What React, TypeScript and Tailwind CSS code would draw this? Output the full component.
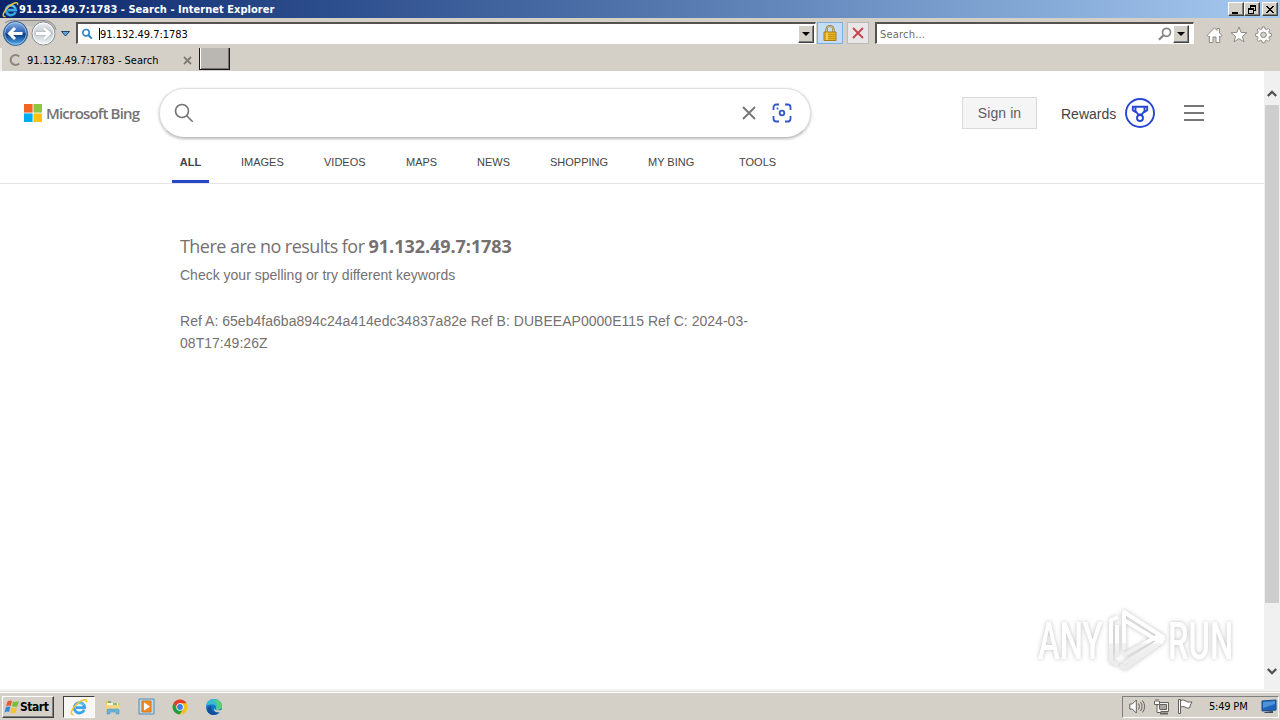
import type { ReactNode } from "react";

const tabs = [
  { label: "IMAGES", width: "w-[83px]" },
  { label: "VIDEOS", width: "w-[82px]" },
  { label: "MAPS", width: "w-[71px]" },
  { label: "NEWS", width: "w-[73px]" },
  { label: "SHOPPING", width: "w-[98px]" },
  { label: "MY BING", width: "w-[91px]" },
  { label: "TOOLS", width: "w-[60px]" },
];

const raised = "border border-t-white border-l-white border-r-[#404040] border-b-[#404040] bg-[#d4d0c8] shadow-[inset_-1px_-1px_0_#808080]";

function WindowButton({ children }: { children: ReactNode }) {
  return (
    <button className={`flex h-[14px] w-[16px] items-center justify-center ${raised}`}>
      <svg width="12" height="11" viewBox="0 0 12 11" shapeRendering="crispEdges">{children}</svg>
    </button>
  );
}

function DropButton() {
  return (
    <span className={`flex h-[18px] w-[16px] items-center justify-center ${raised}`}>
      <svg width="8" height="4" viewBox="0 0 8 4"><path d="M0 0h8L4 4z" /></svg>
    </span>
  );
}

function IeLogo({ size }: { size: number }) {
  return (
    <svg className="shrink-0" width={size} height={size} viewBox="0 0 18 18" fill="none">
      <path d="M14.2 11.8A5.2 5.2 0 1 1 14.6 9.700H6" stroke="#3aa6e6" strokeWidth="2.800" />
      <path d="M5 7.500A5 5 0 0 1 13.500 7" stroke="#8fd6f7" strokeWidth="1" />
      <path d="M3.700 16.400C-1 17.500 1.500 10.400 7.400 5.600 12 1.800 17.800-.2 16.400 4.400" stroke="#f0c62e" strokeWidth="1.500" />
    </svg>
  );
}

function TitleBar() {
  return (
    <div className="flex h-[18px] items-center bg-linear-to-r from-[#0a246a] to-[#a6caf0] pr-[2px] pl-[2px]">
      <IeLogo size={17} />
      <span className="pt-px text-[11px] leading-[17px] font-bold tracking-[0.03px] whitespace-nowrap text-white">
        91.132.49.7:1783 - Search - Internet Explorer
      </span>
      <div className="ml-auto flex">
        <WindowButton><path d="M2 8h6v2H2z" /></WindowButton>
        <WindowButton>
          <path d="M4 1h6v6H8V6h1V3H5v1H4zM2 4h6v6H2zm1 2v3h4V6z" fillRule="evenodd" />
        </WindowButton>
        <span className="w-[2px]" />
        <WindowButton>
          <path d="M2 2h2v1h1v1h2V3h1V2h2v1H9v1H8v1H7v1h1v1h1v1h1v1H8V8H7V7H5v1H4v1H2V8h1V7h1V6h1V5H4V4H3V3H2z" />
        </WindowButton>
      </div>
    </div>
  );
}

function AddressBar() {
  return (
    <div className="flex h-[30px] items-start">
      <svg className="shrink-0" width="76" height="29" viewBox="0 0 76 29">
        <defs>
          <linearGradient id="back" x1="0" y1="0" x2="0" y2="1">
            <stop offset="0" stopColor="#8db5e6" />
            <stop offset=".48" stopColor="#285fb4" />
            <stop offset=".52" stopColor="#08357f" />
            <stop offset="1" stopColor="#55b5f2" />
          </linearGradient>
          <linearGradient id="fwd" x1="0" y1="0" x2="0" y2="1">
            <stop offset="0" stopColor="#eff0f1" />
            <stop offset=".5" stopColor="#c5cbd0" />
            <stop offset="1" stopColor="#f4f8fa" />
          </linearGradient>
        </defs>
        <path d="M5 5Q9 1.500 16 2.500h28q9 0 12 9" fill="#c3c0bc" stroke="#8c8b89" />
        <circle cx="15.500" cy="15.500" r="12" fill="url(#back)" stroke="#385b88" />
        <circle cx="15.500" cy="15.500" r="10.800" fill="none" stroke="#a8cdee" strokeWidth=".8" />
        <path d="M15 10l-5.500 5.500L15 21M10 15.500h12.500" fill="none" stroke="#fff" strokeWidth="3" />
        <circle cx="43.500" cy="15.500" r="11.500" fill="url(#fwd)" stroke="#858b91" />
        <circle cx="43.500" cy="15.500" r="10.400" fill="none" stroke="#fff" />
        <path d="M44 10l5.500 5.500L44 21M49 15.500H36" fill="none" stroke="#aeb3b8" strokeWidth="4" />
        <path d="M44 10l5.500 5.500L44 21M49 15.500H36" fill="none" stroke="#fff" strokeWidth="2.800" />
        <path d="M61.500 13.500h8L65.500 18z" fill="#5fa5dc" stroke="#1b466f" />
      </svg>
      <div className="mt-[4px] flex h-[22px] w-[740px] items-center border-t-2 border-r border-b border-l-2 border-t-[#555250] border-r-white border-b-white border-l-[#555250] bg-white">
        <svg className="ml-[3px]" width="12" height="12" viewBox="0 0 12 12" fill="none" stroke="#3185c5">
          <circle cx="5" cy="4.700" r="3.200" strokeWidth="1.600" />
          <path d="M7.300 7l3.500 3.500" strokeWidth="2" />
        </svg>
        <span className="ml-[6px] h-[12px] w-px bg-black" />
        <span className="pt-[2px] text-[11px] leading-[16px] tracking-[-0.03px] text-black">91.132.49.7:1783</span>
        <span className="mr-px ml-auto"><DropButton /></span>
      </div>
      <div className="mt-[4px] ml-px flex h-[22px] w-[26px] items-center justify-center border border-[#7eaee4] bg-[#c5dcf7]">
        <svg width="14" height="17" viewBox="0 0 14 17">
          <path d="M3.500 8V4.500a3.500 3.500 0 0 1 7 0V8" fill="none" stroke="#8f7a3d" strokeWidth="2.200" />
          <path d="M3.500 8V4.500a3.500 3.500 0 0 1 7 0V8" fill="none" stroke="#e4cf85" strokeWidth=".8" />
          <path d="M1 7h12v8.500H1z" fill="#e8b424" stroke="#a87b16" />
          <path d="M1.500 9.500h11M1.500 11.500h11M1.500 13.500h11" stroke="#c9961c" />
          <path d="M4 7.500v7.500" stroke="#f9dc70" strokeWidth="1.400" />
        </svg>
      </div>
      <div className="mt-[4px] ml-[4px] flex h-[22px] w-[22px] items-center justify-center border border-[#bcb8b6] bg-[#e9e6e7]">
        <svg width="12" height="12" viewBox="0 0 12 12"><path d="M1 1l10 10M11 1L1 11" stroke="#c4454e" strokeWidth="1.900" /></svg>
      </div>
      <div className="mt-[4px] ml-[6px] flex h-[22px] w-[319px] items-center border-t-2 border-r border-b border-l-2 border-t-[#555250] border-r-white border-b-white border-l-[#555250] bg-white">
        <span className="ml-[3px] pt-[2px] text-[11px] leading-[16px] tracking-[0.200px] text-[#6d6d6d]">Search...</span>
        <svg className="ml-auto" width="14" height="14" viewBox="0 0 14 14" fill="none" stroke="#858585">
          <circle cx="8.500" cy="5.300" r="4" strokeWidth="1.700" />
          <path d="M5.700 8L1 12.700" strokeWidth="2.200" />
        </svg>
        <span className="mr-[4px] ml-[1px]"><DropButton /></span>
      </div>
      <svg className="mt-[8px] ml-[12px]" width="68" height="19" viewBox="0 0 68 19" fill="#fff" stroke="#8d8984" strokeLinejoin="round">
        <path d="M1 9.500L8.500 1.800l2.500 2.600V2.500h2.500V7L16 9.500l-1.500 1.300-.8-.8v6.500H10V11H7v5.500H3.300V10l-.8.8z" />
        <path d="M33 1l2.100 5.400 5.900.3-4.600 3.600 1.600 5.600-5-3.200-5 3.200 1.600-5.600L25 6.700l5.900-.3z" />
        <path d="M56.300 1h2.400l.4 2 1.500.6 1.700-1.200 1.700 1.700-1.200 1.700.6 1.500 2 .4v2.400l-2 .4-.6 1.500 1.200 1.700-1.700 1.700-1.700-1.200-1.500.6-.4 2h-2.400l-.4-2-1.500-.6-1.700 1.200-1.700-1.700 1.200-1.700-.6-1.500-2-.4V7.700l2-.4.6-1.500-1.200-1.700 1.700-1.700 1.700 1.200 1.500-.6z" />
        <circle cx="57.500" cy="8.900" r="2.800" fill="#d4d0c8" />
      </svg>
    </div>
  );
}

function TabBar() {
  return (
    <div className="flex h-[23px] items-start">
      <div className="flex h-[23px] w-[199px] items-center border-l-2 border-l-[#f0eeea] pl-[7px]">
        <svg width="12" height="12" viewBox="0 0 12 12"><path d="M10.200 2.500A5 5 0 1 0 10.200 9.500" fill="none" stroke="#898581" strokeWidth="2" /></svg>
        <span className="ml-[6px] pt-[2px] text-[11px] leading-[16px] tracking-[-0.03px] text-black">91.132.49.7:1783 - Search</span>
        <svg className="mt-px mr-[7px] ml-auto" width="9" height="9" viewBox="0 0 9 9"><path d="M1 1l7 7M8 1L1 8" stroke="#807c78" strokeWidth="1.800" /></svg>
      </div>
      <div className="h-[22px] w-[31px] border-r border-b border-l border-[#171717] bg-[#bab6b1] shadow-[inset_1px_0_0_#fff,inset_-1px_-1px_0_#777370]" />
    </div>
  );
}

function BingHeader() {
  return (
    <header className="h-[113px] border-b border-[#e5e5e5]">
      <div className="flex h-[74px] items-start pt-[17px]">
        <div className="flex h-[50px] w-[159px] shrink-0 items-center pl-[24px]">
          <svg width="18" height="18" viewBox="0 0 18 18">
            <path d="M0 0h8.600v8.600H0z" fill="#f26522" />
            <path d="M9.400 0H18v8.600H9.400z" fill="#8dc63f" />
            <path d="M0 9.400h8.600V18H0z" fill="#00aeef" />
            <path d="M9.400 9.400H18V18H9.400z" fill="#ffc20e" />
          </svg>
          <span className="ml-[4px] font-['Open_Sans',sans-serif] text-[15px] font-semibold tracking-[-0.820px] whitespace-nowrap text-[#737373]">Microsoft Bing</span>
        </div>
        <div className="flex h-[50px] w-[652px] shrink-0 items-center rounded-full border border-[#dfdfdf] border-b-[#c0c0c0] bg-white pr-[18px] pl-[14px] shadow-[0_1px_3px_rgba(0,0,0,0.280)]">
          <svg width="20" height="20" viewBox="0 0 20 20" fill="none" stroke="#737373" strokeWidth="1.600">
            <circle cx="8" cy="8" r="6.500" />
            <path d="M12.700 12.700l6 6" />
          </svg>
          <svg className="ml-auto" width="14" height="14" viewBox="0 0 14 14"><path d="M1 1l12 12M13 1L1 13" stroke="#767676" strokeWidth="1.900" /></svg>
          <svg className="ml-[16px]" width="20" height="20" viewBox="0 0 20 20" fill="none" stroke="#3455c8" strokeWidth="1.800">
            <path d="M1.500 7V4.200a2.700 2.700 0 0 1 2.700-2.700H7M13 1.500h2.800a2.700 2.700 0 0 1 2.700 2.700V7M18.500 13v2.800a2.700 2.700 0 0 1-2.700 2.700H13M7 18.500H4.200a2.700 2.700 0 0 1-2.700-2.700V13" />
            <circle cx="10" cy="10" r="2.300" />
            <circle cx="5.500" cy="5.500" r="1" fill="#3455c8" stroke="none" />
          </svg>
        </div>
        <div className="mt-[9px] ml-[151px] flex h-[32px] items-center">
          <button className="h-[32px] w-[75px] border border-[#d9d9d9] bg-[#f5f5f5] text-[14px] tracking-[0.100px] text-[#5c5c5c]">Sign in</button>
          <span className="ml-[24px] w-[64px] pt-[2px] text-[14px] text-[#444]">Rewards</span>
          <svg width="30" height="30" viewBox="0 0 30 30" fill="none" stroke="#2747d2" strokeWidth="1.900">
            <circle cx="15" cy="15" r="14" />
            <path d="M10.500 8.800h9V13l-2.800 3.500h-3.400L10.500 13zM10.500 8.800H7.800v3.400l3 2M19.500 8.800h2.700v3.400l-3 2" />
            <circle cx="15" cy="20" r="3" />
          </svg>
          <div className="ml-[29px] flex w-[20px] flex-col gap-[5px]">
            <i className="h-[2px] bg-[#767676]" />
            <i className="h-[2px] bg-[#767676]" />
            <i className="h-[2px] bg-[#767676]" />
          </div>
        </div>
      </div>
      <nav className="flex h-[38px] pl-[172px] text-[11px] leading-[34px] text-[#444]">
        <div className="mr-[32px] h-[38px] w-[37px] border-b-[3px] border-[#2747c8] text-center font-bold">ALL</div>
        {tabs.map((t) => (
          <div key={t.label} className={`${t.width} shrink-0`}>{t.label}</div>
        ))}
      </nav>
    </header>
  );
}

function Watermark() {
  return (
    <svg
      className="absolute right-[25px] bottom-[13px] drop-shadow-[0_0_2px_rgba(0,0,0,0.250)]"
      width="210" height="70" viewBox="0 0 210 70"
    >
      <defs>
        <linearGradient id="fade" gradientUnits="userSpaceOnUse" x1="0" y1="5" x2="0" y2="64">
          <stop offset="0" stopColor="#fff" />
          <stop offset=".53" stopColor="#fff" />
          <stop offset=".56" stopColor="#f1f1f1" />
          <stop offset="1" stopColor="#ebebeb" />
        </linearGradient>
      </defs>
      <g fill="url(#fade)" fontFamily="Roboto, sans-serif" fontSize="51" fontWeight="500">
        <text transform="translate(9 53) scale(.68 1)" textLength="95" lengthAdjust="spacingAndGlyphs">ANY</text>
        <text transform="translate(139 53) scale(.68 1)" textLength="96" lengthAdjust="spacingAndGlyphs">RUN</text>
      </g>
      <g fill="none" stroke="url(#fade)" strokeWidth="4" strokeLinejoin="round">
        <path d="M89 11l-7 3v41l7 4" />
        <path d="M88 19v31" />
        <path d="M95 44V6l39 25-3 5-36-22" />
        <path d="M95 49l34-19 5 3-40 25" />
        <path d="M134 35L96 62l-5-3" />
      </g>
    </svg>
  );
}

function Scrollbar() {
  return (
    <div className="flex w-[16px] shrink-0 flex-col items-center bg-[#f0f0f0]">
      <svg className="mt-[19px] h-[7px] shrink-0" width="10" height="7" viewBox="0 0 10 7" fill="none" stroke="#505050" strokeWidth="2.300"><path d="M.8 6L5 1.800 9.200 6" /></svg>
      <div className="mt-[8px] h-[498px] w-[14px] shrink-0 bg-[#cdcdcd]" />
      <svg className="mt-[65px] h-[7px] shrink-0" width="10" height="7" viewBox="0 0 10 7" fill="none" stroke="#505050" strokeWidth="2.300"><path d="M.8 1L5 5.200 9.200 1" /></svg>
    </div>
  );
}

function Taskbar() {
  return (
    <footer className="flex h-[28px] items-center border-t border-white bg-[#d4d0c8] pr-[1px] pl-[2px]">
      <button className={`flex h-[22px] w-[52px] items-center pl-[1px] text-[12px] font-bold tracking-[-0.450px] text-black ${raised}`}>
        <svg className="shrink-0" width="16" height="16" viewBox="0 0 16 16">
          <path d="M3.500 2.500Q6 .8 8 2L6.700 7Q4.500 6 2 7.500z" fill="#e65a2b" />
          <path d="M9 2.500q2.500 1.200 6-.5l-1.500 5.200q-3 1.300-5.500 0z" fill="#7abc42" />
          <path d="M1.800 8.500q2.500-1.500 4.600-.5L5 13q-2-1-4.500.5z" fill="#3987d3" />
          <path d="M7.500 8.500q2.800 1.300 5.500 0L11.700 13.500q-2.500 1.500-5.500 0z" fill="#f6c42a" />
        </svg>
        <span className="pt-px leading-[16px]">Start</span>
      </button>
      <div className="ml-[9px] flex h-[22px] w-[32px] items-center justify-center border border-t-[#404040] border-r-white border-b-white border-l-[#404040] bg-[#f7f6f4]">
        <IeLogo size={18} />
      </div>
      <svg className="ml-[9px]" width="18" height="18" viewBox="0 0 18 18">
        <path d="M2 3h5l1 2h8v9H2z" fill="#e6c75b" />
        <path d="M3 5h11v6H3z" fill="#fff7d1" />
        <path d="M4 4h3M9 6h4" stroke="#55ad6c" strokeWidth="1.500" />
        <path d="M2 7h14v6H2z" fill="#f0d886" />
        <path d="M3 16v-4q0-1 1-1h10q1 0 1 1v4h-3v-2H6v2z" fill="#67b5df" stroke="#4d8cb5" strokeWidth=".5" />
      </svg>
      <svg className="ml-[16px]" width="17" height="17" viewBox="0 0 17 17">
        <path d="M1 1h15v15H1z" fill="#bcdcf2" stroke="#538ab3" />
        <path d="M4 3h9v11H4z" fill="#f38b1f" stroke="#d87518" />
        <path d="M6 4.500l6 4-6 4z" fill="#fff" />
      </svg>
      <svg className="ml-[17px]" width="16" height="16" viewBox="0 0 16 16">
        <circle cx="8" cy="8" r="7.500" fill="#fbc116" />
        <path d="M1.500 4.300A7.500 7.500 0 0 1 14.500 4.300H8L4.800 9.900z" fill="#e33b2e" />
        <path d="M1.500 4.300A7.500 7.500 0 0 0 7.500 15.500L11.200 9.900H4.800z" fill="#229a48" />
        <circle cx="8" cy="8" r="3.700" fill="#fff" />
        <circle cx="8" cy="8" r="2.900" fill="#377fe5" />
      </svg>
      <svg className="ml-[17px]" width="18" height="18" viewBox="0 0 18 18">
        <circle cx="9" cy="9" r="8" fill="#1576c7" />
        <path d="M1.200 8C2 3.500 5 1 9 1c5 0 8 3.500 8 7 0 4-5.500 5-6.500 3 1.200-1.500.5-4.500-3-4.500C4 6.500 2 7 1.200 8z" fill="#36bdd1" />
        <path d="M11 1.500c4 1 6 3.500 6 6.500 0 3-4 4.500-6.200 3.400 2-2.400 1.800-6-1.300-9z" fill="#5ecb76" />
        <path d="M6.500 8c-1.300 4 2.500 7.300 8 5.500C12 18 4 18.500 2 12.500 1.500 10 4 7.500 6.500 8z" fill="#124f9c" />
        <path d="M9.500 10.500c.5 2 4.500 2.500 8 1l-1.700 2.700c-4 .8-7.700-.7-6.300-3.700z" fill="#d4d0c8" />
      </svg>
      <div className="ml-auto flex h-[22px] w-[157px] items-center border border-t-[#808080] border-r-white border-b-white border-l-[#808080] pl-[6px]">
        <svg width="66" height="17" viewBox="0 0 66 17" fill="none" stroke="#66625d">
          <path d="M.8 6h2.500l4-4v13l-4-4H.8z" fill="#fff" />
          <path d="M9.500 5.500q2 3 0 6M11.500 4q3.200 4.500 0 9M13.500 2.500q4.300 6 0 12" />
          <path d="M28.500 4.500h11v9h-11z" fill="#f2f0ed" />
          <path d="M30.500 6.500h7v5h-7z" fill="#aaa7a2" />
          <path d="M31 15.500h8" strokeWidth="2" />
          <path d="M25.500 3v3.500h5V3M27 1v3M29 1v3M28 6.500v8h4" fill="#fff" />
          <path d="M49.500 15.500v-14h2v14zM51.500 2.500q3-1.500 5.500.5 1 1 2 1h4q-2 3-2.500 6-3 .5-4.500-1-2-1-4.500 0z" fill="#fff" />
        </svg>
        <span className="ml-[14px] pt-px text-[11px] leading-[16px] tracking-[-0.200px] whitespace-nowrap text-black">5:49 PM</span>
        <svg className="mr-px ml-auto" width="16" height="15" viewBox="0 0 16 15">
          <path d="M1 2l14-1v10l-14 1z" fill="#1c65ba" stroke="#174b89" />
          <path d="M2 3l12-1v3L2 9z" fill="#4c93d7" />
          <path d="M3 13l9-1v2H4z" fill="#38495c" />
        </svg>
      </div>
    </footer>
  );
}

export default function App() {
  return (
    <div className="flex h-[720px] w-[1280px] flex-col overflow-hidden bg-[#d4d0c8] font-['DejaVu_Sans_Condensed','DejaVu_Sans',sans-serif]">
      <TitleBar />
      <AddressBar />
      <TabBar />

      {/* Page */}
      <main className="flex h-[618px] bg-white font-['Liberation_Sans',Arial,sans-serif]">
        <div className="relative min-w-0 flex-1">
          <BingHeader />
          <section className="w-[760px] pt-[49px] pl-[180px] text-[14px] leading-[22px] text-[#767070]">
            <h1 className="font-['Open_Sans',sans-serif] text-[18px] leading-[26px] tracking-[-0.540px] whitespace-nowrap">
              There are no results for <b className="tracking-[-0.050px]">91.132.49.7:1783</b>
            </h1>
            <p className="mt-[5px]">Check your spelling or try different keywords</p>
            <p className="mt-[24px] tracking-[0.030px]">
              Ref A: 65eb4fa6ba894c24a414edc34837a82e Ref B: DUBEEAP0000E115 Ref C: 2024-03-<br />
              08T17:49:26Z
            </p>
          </section>
          <Watermark />
        </div>
        <Scrollbar />
      </main>
      <div className="h-[3px] border-b border-[#dedbd6] bg-[#f3f2f0]" />
      <Taskbar />
    </div>
  );
}
